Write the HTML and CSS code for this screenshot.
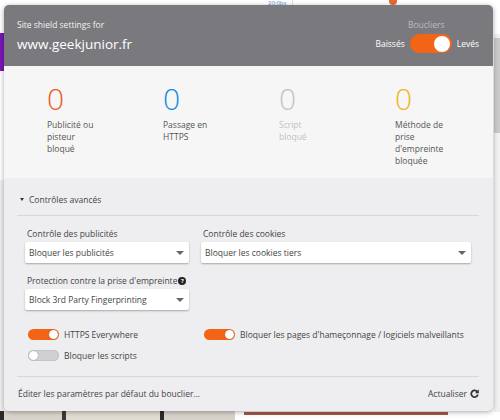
FILE: index.html
```html
<!DOCTYPE html>
<html lang="fr">
<head>
<meta charset="utf-8">
<link rel="stylesheet" href="styles.css">
</head>
<body>
<div class="bg-page">
  <div class="bg-purple"></div>
  <div class="bg-leftgrey"></div>
  <div class="bg-time">20:0bs</div>
  <div class="bg-pin"></div>
  <div class="bg-photo"></div>
  <div class="bg-red"></div>
  <div class="bg-scroll"><div class="bg-thumb"></div></div>
</div>
<div class="popup">
  <header class="header">
    <div class="site">
      <div class="site-label">Site shield settings for</div>
      <div class="site-domain">www.geekjunior.fr</div>
    </div>
    <div class="shields">
      <div class="shields-title">Boucliers</div>
      <div class="shields-row">
        <span>Baissés</span>
        <span class="big-toggle"><span class="big-knob"></span></span>
        <span>Levés</span>
      </div>
    </div>
  </header>
  <section class="stats">
    <div class="stat">
      <div class="num orange">0</div>
      <div class="stat-label">Publicité ou<br>pisteur<br>bloqué</div>
    </div>
    <div class="stat">
      <div class="num blue">0</div>
      <div class="stat-label">Passage en<br>HTTPS</div>
    </div>
    <div class="stat">
      <div class="num grey">0</div>
      <div class="stat-label faded">Script<br>bloqué</div>
    </div>
    <div class="stat">
      <div class="num yellow">0</div>
      <div class="stat-label">Méthode de<br>prise<br>d'empreinte<br>bloquée</div>
    </div>
  </section>
  <section class="controls">
    <div class="adv"><span class="caret"></span>Contrôles avancés</div>
    <div class="selects">
      <div class="field">
        <div class="field-label">Contrôle des publicités</div>
        <div class="select">Bloquer les publicités<span class="arrow"></span></div>
      </div>
      <div class="field">
        <div class="field-label">Contrôle des cookies</div>
        <div class="select">Bloquer les cookies tiers<span class="arrow"></span></div>
      </div>
      <div class="field">
        <div class="field-label">Protection contre la prise d'empreinte<span class="help">?</span></div>
        <div class="select">Block 3rd Party Fingerprinting<span class="arrow"></span></div>
      </div>
    </div>
    <div class="switches">
      <div class="switch-row"><span class="sw on"><span class="knob"></span></span>HTTPS Everywhere</div>
      <div class="switch-row"><span class="sw on"><span class="knob"></span></span>Bloquer les pages d'hameçonnage / logiciels malveillants</div>
      <div class="switch-row"><span class="sw off"><span class="knob"></span></span>Bloquer les scripts</div>
    </div>
    <footer class="footer">
      <span>Éditer les paramètres par défaut du bouclier...</span>
      <span class="reload">Actualiser
        <svg width="9" height="9" viewBox="0 0 10 10"><path d="M8.1 3.1A3.7 3.7 0 1 0 8.7 6.2" fill="none" stroke="#333" stroke-width="2"/><path d="M9.8 0.4V4.6H5.6Z" fill="#333"/></svg>
      </span>
    </footer>
  </section>
</div>
</body>
</html>
```

FILE: styles.css
```css
* { box-sizing: border-box; }
html, body { margin: 0; padding: 0; }
body {
  width: 500px;
  height: 420px;
  overflow: hidden;
  background: #ffffff;
  font-family: "Open Sans", "Noto Sans", sans-serif;
  color: #555;
  position: relative;
  padding: 5px 7px 0 4px;
}
.bg-page { position: absolute; inset: 0; z-index: 0; }
.bg-purple { position: absolute; left: 0; top: 33px; width: 4px; height: 38px; background: #7a16b8; }
.bg-leftgrey { position: absolute; left: 0; top: 180px; width: 4px; height: 232px; background: #efefef; }
.bg-time { position: absolute; left: 262px; top: 0; font-size: 6px; line-height: 6px; color: #5b8fd0; padding: 0 6px; border-right: 1px solid #ddd; }
.bg-pin { position: absolute; left: 389px; top: -3px; width: 8px; height: 8px; border-radius: 50%; background: #e86a2a; }
.bg-photo { position: absolute; left: 0; top: 411px; width: 235px; height: 9px; background: linear-gradient(90deg, #2a2a2a 0 4px, #d9d4cb 4px 62px, #3a3a3a 62px 66px, #e2ddd3 66px 160px, #2b2b2b 160px 164px, #d8d3ca 164px 235px); }
.bg-red { position: absolute; left: 244px; top: 412px; width: 204px; height: 3px; background: #a5574a; }
.bg-scroll { position: absolute; left: 494px; top: 34px; width: 6px; height: 378px; background: #f1f1f1; }
.bg-thumb { width: 6px; height: 95px; margin-top: 4px; background: #c9c9c9; }

.popup {
  position: relative;
  z-index: 1;
  width: 489px;
  height: 406px;
  border-radius: 5px;
  overflow: hidden;
  background: #eeeef0;
  box-shadow: 0 1px 5px rgba(0,0,0,0.35);
  display: flex;
  flex-direction: column;
}
.header {
  height: 61px;
  flex: none;
  background: #7a797d;
  color: #fff;
  display: flex;
  justify-content: space-between;
  padding: 14px 14px 0 13px;
}
.site-label { font-size: 8.5px; line-height: 12px; color: #f2f2f2; }
.site-domain { font-size: 13.5px; line-height: 18px; margin-top: 4px; }
.shields { display: flex; flex-direction: column; align-items: center; }
.shields-title { font-size: 8.5px; line-height: 12px; color: #bdbcc0; margin-right: 2px; }
.shields-row { display: flex; align-items: center; gap: 5px; font-size: 8.5px; margin-top: 3px; }
.big-toggle {
  width: 42px; height: 19px; border-radius: 10px; background: #f26516;
  display: flex; align-items: center; justify-content: flex-end; padding-right: 2px;
}
.big-knob { width: 16px; height: 16px; border-radius: 50%; background: #fff; }

.stats {
  height: 112px;
  flex: none;
  background: #f6f6f6;
  display: grid;
  grid-template-columns: repeat(4, 116px);
  align-content: start;
  padding: 18px 0 0 43px;
}
.num { font-size: 30px; font-weight: 300; line-height: 30px; height: 35px; }
.orange { color: #ef5b1d; }
.blue { color: #1a8ae0; }
.grey { color: #c4c4c4; }
.yellow { color: #f1b52a; }
.stat-label { font-size: 8.5px; line-height: 12px; color: #555; }
.stat-label.faded { color: #c2c2c2; }

.controls {
  flex: 1;
  padding: 0 14px 0 13px;
  display: flex;
  flex-direction: column;
}
.adv {
  font-size: 8.5px;
  color: #444;
  height: 38px;
  flex: none;
  display: flex;
  align-items: center;
  padding: 6px 0 0 3px;
  border-bottom: 1px solid #d7d7da;
}
.caret {
  width: 0; height: 0;
  border-left: 2.5px solid transparent; border-right: 2.5px solid transparent;
  border-top: 3.5px solid #333;
  margin-right: 5px;
}
.selects {
  display: grid;
  grid-template-columns: 164px 270px;
  column-gap: 12px;
  row-gap: 12px;
  padding: 12px 0 0 8px;
}
.field-label { font-size: 8.5px; line-height: 12px; color: #444; margin-bottom: 2px; padding-left: 2px; display: flex; align-items: center; }
.help {
  display: inline-flex; align-items: center; justify-content: center;
  width: 8px; height: 8px; border-radius: 50%; background: #222; color: #fff;
  font-size: 6px; line-height: 8px; font-weight: bold; margin-left: 1px;
}
.select {
  height: 21px;
  background: #fff;
  border-radius: 2px;
  box-shadow: 0 1px 2px rgba(0,0,0,0.3);
  font-size: 8.5px;
  color: #444;
  display: flex;
  align-items: center;
  justify-content: space-between;
  padding: 0 5px 0 4px;
}
.arrow {
  width: 0; height: 0;
  border-left: 4.5px solid transparent; border-right: 4.5px solid transparent;
  border-top: 4.5px solid #666;
}
.switches {
  display: grid;
  grid-template-columns: 176px 1fr;
  row-gap: 8px;
  align-content: start;
  padding: 18px 0 0 11px;
  height: 67px;
  flex: none;
  border-bottom: 1px solid #d7d7da;
}
.switch-row { display: flex; align-items: center; font-size: 8.5px; color: #444; height: 13px; }
.sw {
  width: 31px; height: 11px; border-radius: 6px;
  display: flex; align-items: center; padding: 0 1px;
  margin-right: 5px;
}
.sw.on { background: #f26516; justify-content: flex-end; }
.sw.off { background: #d0d0d2; justify-content: flex-start; box-shadow: inset 0 0 0 1px #c4c4c6; }
.knob { width: 9px; height: 9px; border-radius: 50%; background: #fff; box-shadow: 0 0 1px rgba(0,0,0,0.4); }
.footer {
  flex: 1;
  display: flex;
  justify-content: space-between;
  align-items: center;
  font-size: 8.5px;
  color: #444;
  padding: 0 0 1px 1px;
}
.reload { display: flex; align-items: center; gap: 3px; }
```
